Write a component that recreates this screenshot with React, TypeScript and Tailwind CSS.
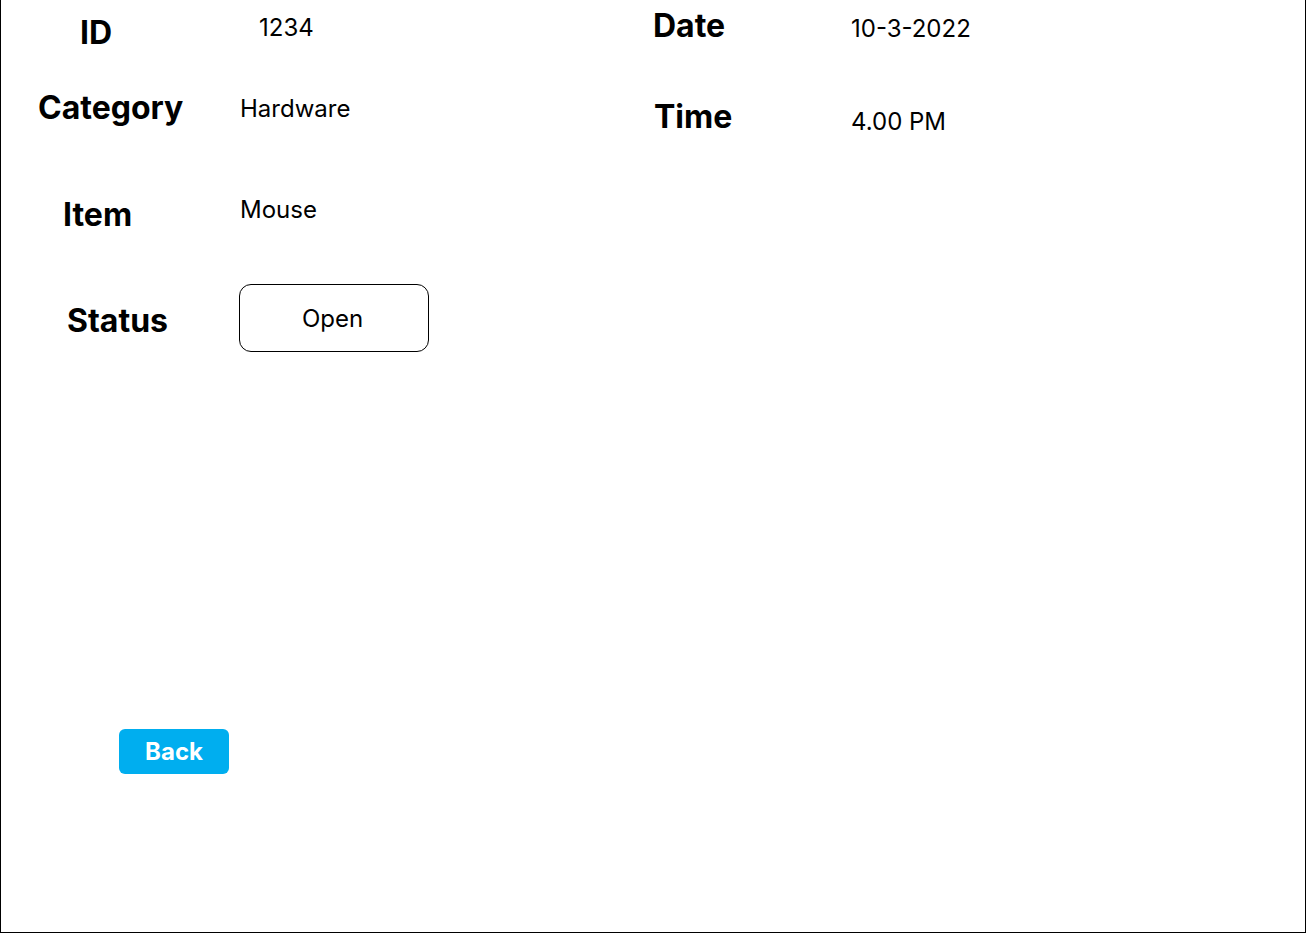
import React from "react";

export default function App() {
  return (
    <div className="w-[1306px] h-[933px] bg-white border-x border-b border-black font-['Inter',sans-serif] text-black flex">
      {/* Left column */}
      <div className="w-[652px] flex flex-col">
        <div className="flex h-[80px] items-start">
          <div className="w-[239px] pl-[79px] mt-[13px] text-[32px] leading-[39px] font-bold">ID</div>
          <div className="pl-[19px] mt-[13px] text-[24px] leading-[29px]">1234</div>
        </div>
        <div className="flex h-[100px] items-start">
          <div className="w-[239px] pl-[37px] mt-[8px] text-[32px] leading-[39px] font-bold">Category</div>
          <div className="mt-[14px] text-[24px] leading-[29px]">Hardware</div>
        </div>
        <div className="flex h-[90px] items-start">
          <div className="w-[239px] pl-[62px] mt-[15px] text-[32px] leading-[39px] font-bold">Item</div>
          <div className="mt-[15px] text-[24px] leading-[29px]">Mouse</div>
        </div>
        <div className="flex h-[100px] items-start">
          <div className="w-[238px] pl-[66px] mt-[31px] text-[32px] leading-[39px] font-bold">Status</div>
          <div className="mt-[14px] w-[190px] h-[68px] border border-black rounded-[12px] flex items-center justify-center pr-[3px] text-[24px] leading-[29px]">
            Open
          </div>
        </div>
        <div className="pl-[118px] mt-[359px]">
          <button className="w-[110px] h-[45px] rounded-[6px] bg-[#00AEEF] text-white text-[24px] font-bold leading-[29px]">
            Back
          </button>
        </div>
      </div>

      {/* Right column */}
      <div className="flex-1 flex flex-col">
        <div className="flex h-[92px] items-start">
          <div className="w-[198px] mt-[6px] text-[32px] leading-[39px] font-bold">Date</div>
          <div className="mt-[14px] text-[24px] leading-[29px]">10-3-2022</div>
        </div>
        <div className="flex items-start">
          <div className="w-[198px] pl-[1px] mt-[5px] text-[32px] leading-[39px] font-bold">Time</div>
          <div className="mt-[15px] text-[24px] leading-[29px]">4.00 PM</div>
        </div>
      </div>
    </div>
  );
}
